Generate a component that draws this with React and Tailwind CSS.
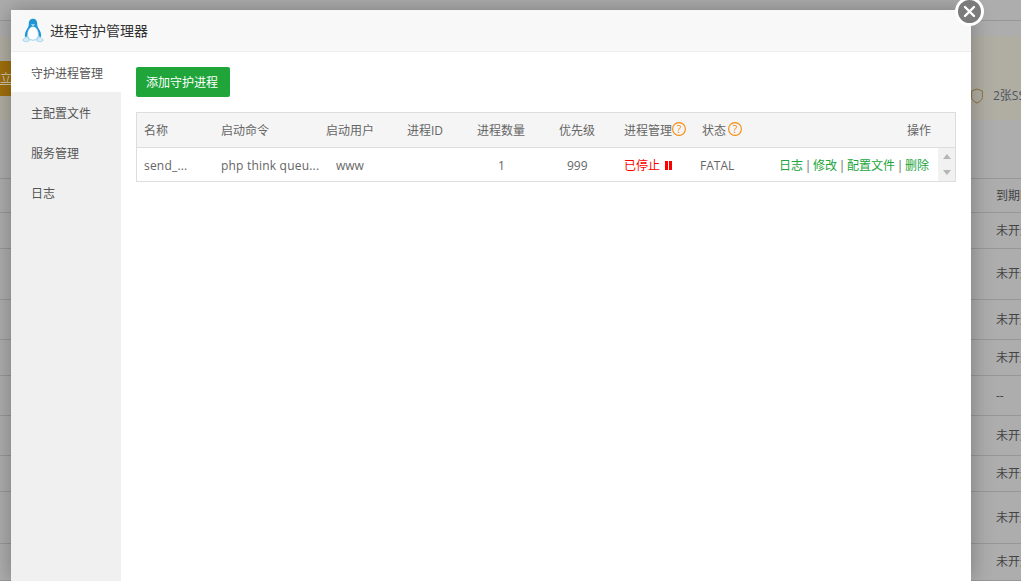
import React from "react";

const font = "font-['Open_Sans','Noto_Sans_CJK_SC',sans-serif]";

function Penguin() {
  return (
    <svg width="22" height="25" viewBox="0 0 22 25" className="shrink-0">
      <path d="M11 .8C8 .8 6.8 3 6.8 5.800c0 2.600-.8 3.800-2.200 6C3 14.400 2.600 16.600 3 19l2.200-.4C5 15.400 6.200 12 8 10.200h6c1.800 1.800 3 5.200 2.800 8.400L19 19c.4-2.400 0-4.600-1.600-7.200-1.400-2.200-2.200-3.400-2.200-6C15.200 3 14 .8 11 .8z" fill="#1f96d3" />
      <path d="M11 8.600c-3.400 0-5.400 4-5.400 8 0 3.400 2 5.600 5.400 5.600s5.400-2.200 5.400-5.600c0-4-2-8-5.400-8z" fill="#fff" stroke="#58b2de" strokeWidth="0.6" />
      <path d="M8.800 6.200h4.400L11 8.200z" fill="#bfe3f4" />
      <path d="M.8 22.400c1-2.300 2.800-3.500 4.800-3.200l1.800 3.400c-2 1.700-4.200 1.500-6.600-.2zM21.200 22.400c-1-2.300-2.800-3.500-4.800-3.200l-1.800 3.400c2 1.700 4.200 1.500 6.600-.2z" fill="#d4ecf8" stroke="#6fbde3" strokeWidth="0.5" />
    </svg>
  );
}

function Help() {
  return (
    <svg width="14" height="14" viewBox="0 0 14 14" className="shrink-0 mb-[4px]">
      <circle cx="7" cy="7" r="6.4" fill="none" stroke="#f58a0b" strokeWidth="1.1" />
      <text x="7" y="10.600" textAnchor="middle" fontSize="10.500" fill="#f58a0b" fontFamily="'Open Sans',sans-serif">?</text>
    </svg>
  );
}

const bgRows = [
  ["h-[34px]", "到期时"],
  ["h-[36px]", "未开通"],
  ["h-[51px]", "未开通"],
  ["h-[40px]", "未开通"],
  ["h-[36px]", "未开通"],
  ["h-[40px]", "--"],
  ["h-[40px]", "未开通"],
  ["h-[36px]", "未开通"],
  ["h-[52px]", "未开通"],
  ["h-[37px]", "未开通"],
];

function Backdrop() {
  return (
    <div className="w-[1021px] h-[581px] overflow-hidden bg-[#adadad] flex flex-col">
      <div className="h-[21px] shrink-0 border-b border-[#979797]" />
      <div className="h-[15px] shrink-0" />
      <div className="h-[84px] shrink-0 bg-[#b0ada3] flex items-start justify-between">
        <div className="mt-[25px] w-[11px] h-[35px] bg-[#a0700c] text-[12px] text-[#cfc3a8] leading-[35px] underline overflow-hidden whitespace-nowrap">立即</div>
        <div className="mt-[51px] flex items-center gap-[10px] text-[12px] text-[#4d5560] whitespace-nowrap w-[50px]">
          <svg width="12" height="16" viewBox="0 0 12 16" className="shrink-0">
            <path d="M6 1l5.400 2v6.200c0 2.800-2.600 4.700-5.400 5.800C3.200 13.900.6 12 .6 9.200V3z" fill="none" stroke="#8d7440" />
          </svg>
          <span>2张SSL</span>
        </div>
      </div>
      <div className="h-[59px] shrink-0 border-b border-[#979797]" />
      {bgRows.map(([h, t], i) => (
        <div key={i} className={`${h} shrink-0 border-b border-[#979797] flex items-center justify-end text-[12px] text-[#444]`}>
          <span className="w-[25px] whitespace-nowrap overflow-hidden">{t}</span>
        </div>
      ))}
    </div>
  );
}

const td = "pt-[2px] text-[12px] text-[#666] whitespace-nowrap";

function Sep() {
  return <span className="w-[10px] text-center text-[#666]">|</span>;
}

function Table() {
  return (
    <div className="w-[820px] border border-[#ddd] flex flex-col">
      <div className="h-[35px] pt-[2px] bg-[#f5f5f5] border-b border-[#ddd] flex items-center text-[12px] text-[#666]">
        <div className="w-[84px] pl-[7px]">名称</div>
        <div className="w-[105px]">启动命令</div>
        <div className="w-[81px]">启动用户</div>
        <div className="w-[70px]">进程ID</div>
        <div className="w-[82px]">进程数量</div>
        <div className="w-[65px]">优先级</div>
        <div className="w-[78px] flex items-center">进程管理<Help /></div>
        <div className="w-[60px] flex items-center gap-[2px]">状态<Help /></div>
        <div className="flex-1 pr-[24px] text-right">操作</div>
      </div>
      <div className="h-[33px] flex items-center">
        <div className={`w-[84px] pl-[7px] tracking-[0.2px] ${td}`}>send_...</div>
        <div className={`w-[115px] tracking-[0.2px] ${td}`}>php think queu...</div>
        <div className={`w-[162px] ${td}`}>www</div>
        <div className={`w-[69px] ${td}`}>1</div>
        <div className={`w-[57px] ${td}`}>999</div>
        <div className="w-[76px] pt-[2px] flex items-center text-[12px] text-[#ff0000] whitespace-nowrap">
          已停止
          <span className="ml-[5px] flex gap-[1px]">
            <i className="block w-[3px] h-[9px] bg-[#ff0000]" />
            <i className="block w-[3px] h-[9px] bg-[#ff0000]" />
          </span>
        </div>
        <div className={`w-[79px] ${td}`}>FATAL</div>
        <div className="w-[159px] pt-[2px] flex text-[12px] text-[#20a53a] whitespace-nowrap">
          <span>日志</span><Sep /><span>修改</span><Sep /><span>配置文件</span><Sep /><span>删除</span>
        </div>
        <div className="flex-1 self-stretch bg-[#f1f1f1] flex flex-col items-center justify-center gap-[11px]">
          <i className="block w-0 h-0 border-x-[4px] border-x-transparent border-b-[5px] border-b-[#b5b5b5]" />
          <i className="block w-0 h-0 border-x-[4px] border-x-transparent border-t-[5px] border-t-[#b5b5b5]" />
        </div>
      </div>
    </div>
  );
}

export default function App() {
  const menu = ["主配置文件", "服务管理", "日志"];
  return (
    <div className={`relative w-[1021px] h-[581px] overflow-hidden ${font}`}>
      <Backdrop />
      <div className="absolute left-[11px] top-[10px] w-[960px] h-[571px] bg-white flex flex-col shadow-[0_0_20px_rgba(0,0,0,0.3)]">
        <div className="h-[42px] shrink-0 bg-[#f8f8f8] border-b border-[#eee] flex items-center pl-[11px] gap-[6px] text-[14px] text-[#333]">
          <Penguin />
          <span>进程守护管理器</span>
        </div>
        <div className="flex-1 flex min-h-0">
          <div className="w-[110px] shrink-0 bg-[#f0f0f0] flex flex-col">
            <div className="h-[40px] pt-[4px] bg-white flex items-center pl-[20px] text-[12px] text-[#555]">守护进程管理</div>
            {menu.map((m) => (
              <div key={m} className="h-[40px] pt-[4px] flex items-center pl-[20px] text-[12px] text-[#555]">{m}</div>
            ))}
          </div>
          <div className="flex-1 pt-[15px] pl-[15px]">
            <button className="block w-[94px] h-[30px] pt-[2px] pl-[10px] text-left rounded-[2px] bg-[#20a53a] text-white text-[12px]">添加守护进程</button>
            <div className="mt-[15px]">
              <Table />
            </div>
          </div>
        </div>
      </div>
      <button className="absolute left-[955px] top-[-3px] w-[29px] h-[29px] rounded-full bg-[#7b7b7b] border-[3px] border-white flex items-center justify-center">
        <svg width="13" height="13" viewBox="0 0 13 13">
          <path d="M2 2l9 9M11 2l-9 9" stroke="#fff" strokeWidth="2.400" strokeLinecap="round" />
        </svg>
      </button>
    </div>
  );
}
